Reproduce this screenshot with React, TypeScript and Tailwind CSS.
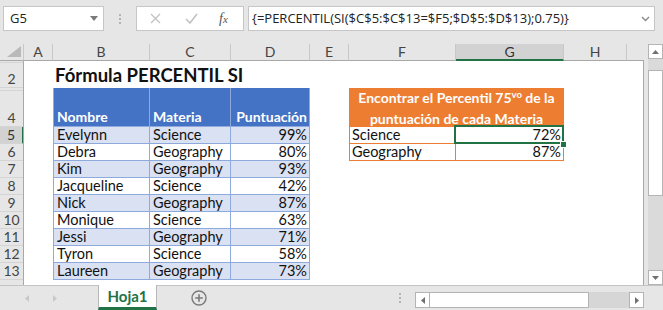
import React from "react";

const SCORES = [
  ["Evelynn", "Science", "99%"],
  ["Debra", "Geography", "80%"],
  ["Kim", "Geography", "93%"],
  ["Jacqueline", "Science", "42%"],
  ["Nick", "Geography", "87%"],
  ["Monique", "Science", "63%"],
  ["Jessi", "Geography", "71%"],
  ["Tyron", "Science", "58%"],
  ["Laureen", "Geography", "73%"],
];

const COLUMNS = ["A", "B", "C", "D", "E", "F", "G", "H"];

const ROW_HEADS = [
  { label: "", h: "h-[2px]" },
  { label: "2", h: "h-[25px]" },
  { label: "", h: "h-[3px]" },
  { label: "4", h: "h-[36px]" },
  ...["5", "6", "7", "8", "9", "10", "11", "12", "13"].map((n) => ({ label: n, h: "h-[17px]" })),
];

const FormulaBar = () => (
  <div className="h-[44px] flex items-start pt-[6px] pl-[3px] font-['Open_Sans',sans-serif]">
    {/* Name box */}
    <div className="w-[101px] h-[25px] bg-white border border-[#c6c6c6] flex items-center justify-between pl-[6px] pr-[5px] text-[13px] text-[#222]">
      <span>G5</span>
      <svg width="8" height="5" viewBox="0 0 8 5">
        <path d="M0 0h8L4 5z" fill="#7a7a7a" />
      </svg>
    </div>
    <div className="w-[32px] h-[25px] flex flex-col items-center justify-center gap-[2px]">
      <span className="w-[2px] h-[2px] bg-[#b4b4b4]" />
      <span className="w-[2px] h-[2px] bg-[#b4b4b4]" />
      <span className="w-[2px] h-[2px] bg-[#b4b4b4]" />
    </div>
    {/* Cancel / enter / fx */}
    <div className="w-[108px] h-[25px] bg-white border border-[#c6c6c6] flex items-center">
      <svg className="ml-[13px]" width="11" height="11" viewBox="0 0 11 11">
        <path d="M1 1l9 9M10 1l-9 9" stroke="#c2c2c2" strokeWidth="1.3" />
      </svg>
      <svg className="ml-[24px]" width="13" height="11" viewBox="0 0 13 11">
        <path d="M1 6l4 4 7-9" stroke="#c2c2c2" strokeWidth="1.6" fill="none" />
      </svg>
      <span className="ml-[21px] font-['Liberation_Serif',serif] italic text-[14px] text-[#555] leading-none">
        f<span className="text-[11px]">x</span>
      </span>
    </div>
    {/* Formula */}
    <div className="ml-[4px] w-[407px] h-[25px] bg-white border border-[#c6c6c6] flex items-center justify-between pl-[3px] pr-[4px] text-[13px] text-[#222] whitespace-nowrap">
      <span>{"{=PERCENTIL(SI($C$5:$C$13=$F5;$D$5:$D$13);0.75)}"}</span>
      <svg width="9" height="6" viewBox="0 0 9 6">
        <path d="M1 1l3.5 3.5L8 1" stroke="#8a8a8a" strokeWidth="1.4" fill="none" />
      </svg>
    </div>
  </div>
);

const Sheet = () => (
  <div className="grid w-[644px] grid-cols-[24px_29px_97px_81px_79px_39px_107px_108px_63px_17px] grid-rows-[17px_2px_25px_3px_36px_repeat(9,17px)_5px] text-[14.5px] leading-[16px]">
    {/* white body */}
    <div className="col-start-2 col-span-9 row-start-2 row-span-14 bg-white border-r border-[#a8a8a8]" />

    {/* corner */}
    <div className="col-start-1 row-start-1 border-b border-r border-b-[#a8a8a8] border-r-[#c8c8c8] flex items-end justify-end pr-[2px] pb-[3px]">
      <svg width="14" height="11" viewBox="0 0 14 11">
        <path d="M14 0v11H0z" fill="#b9b9b9" />
      </svg>
    </div>

    {/* column headers */}
    {COLUMNS.map((c) => (
      <div
        key={c}
        className={
          c === "G"
            ? "row-start-1 flex items-center justify-center bg-[#d2d2d2] border-r border-r-[#c8c8c8] border-b-2 border-b-[#217346] text-[14px] text-[#333]"
            : "row-start-1 flex items-center justify-center border-r border-r-[#c8c8c8] border-b border-b-[#a8a8a8] text-[14px] text-[#444]"
        }
      >
        {c}
      </div>
    ))}
    <div className="row-start-1 border-b border-[#a8a8a8]" />

    {/* row headers */}
    <div className="col-start-1 row-start-2 row-span-14 flex flex-col border-r border-[#a8a8a8] overflow-hidden">
      {ROW_HEADS.map((r, i) => (
        <div
          key={i}
          className={
            r.label === "5"
              ? `${r.h} shrink-0 flex items-end justify-center bg-[#d2d2d2] border-b border-[#d4d4d4] -mr-px border-r-2 border-r-[#217346] text-[14px] text-[#333] leading-[16px]`
              : `${r.h} shrink-0 flex items-end justify-center border-b border-[#d4d4d4] text-[14px] text-[#444] leading-[16px] overflow-hidden`
          }
        >
          {r.label}
        </div>
      ))}
      <div className="h-[5px] shrink-0 flex justify-center text-[14px] text-[#444] leading-[16px] pt-[2px] overflow-hidden">
        14
      </div>
    </div>

    {/* title */}
    <div className="col-start-3 col-span-4 row-start-3 flex items-end pl-[2px] pb-[2px] text-[18.5px] leading-[22px] font-bold whitespace-nowrap">
      Fórmula PERCENTIL SI
    </div>

    {/* data table */}
    <div className="col-start-3 col-span-3 row-start-4 row-span-11 grid grid-cols-[97px_81px_79px] grid-rows-[39px_repeat(9,17px)]">
      <div className="bg-[#4472c4] text-white text-[14px] font-bold flex items-end px-[3px] pb-[1px] border-l border-r border-b border-[#8ea9db]">Nombre</div>
      <div className="bg-[#4472c4] text-white text-[14px] font-bold flex items-end px-[3px] pb-[1px] border-r border-b border-[#8ea9db]">Materia</div>
      <div className="bg-[#4472c4] text-white text-[14px] font-bold flex items-end justify-end px-[2px] pb-[1px] border-r border-b border-[#8ea9db]">Puntuación</div>
      {SCORES.map(([name, subject, score], i) => {
        const bg = i % 2 === 0 ? "bg-[#d9e1f2]" : "bg-white";
        return (
          <React.Fragment key={name}>
            <div className={`${bg} px-[3px] border-l border-r border-b border-[#8ea9db] whitespace-nowrap`}>{name}</div>
            <div className={`${bg} px-[3px] border-r border-b border-[#8ea9db] whitespace-nowrap`}>{subject}</div>
            <div className={`${bg} px-[2px] border-r border-b border-[#8ea9db] text-right`}>{score}</div>
          </React.Fragment>
        );
      })}
    </div>

    {/* result table */}
    <div className="col-start-7 col-span-2 row-start-4 row-span-4 grid grid-cols-[107px_108px] grid-rows-[39px_17px_17px]">
      <div className="col-span-2 bg-[#ed7d31] text-white text-[14px] font-bold text-center leading-[19px] flex flex-col justify-center pt-[1px] border-b border-[#ed7d31] whitespace-nowrap">
        <span>
          Encontrar el Percentil 75<span className="relative -top-[5px] text-[9.5px]">vo</span> de la
        </span>
        <span>puntuación de cada Materia</span>
      </div>
      <div className="px-[2px] border-l border-r border-b border-[#ed7d31]">Science</div>
      <div className="relative px-[2px] border-r border-b border-[#ed7d31] text-right">
        72%
        <div className="absolute -left-[2px] -top-[2px] -right-px -bottom-px border-2 border-[#217346]" />
        <div className="absolute -right-[4px] -bottom-[5px] w-[7px] h-[7px] bg-[#217346] border border-white" />
      </div>
      <div className="px-[2px] border-l border-r border-b border-[#ed7d31]">Geography</div>
      <div className="px-[2px] border-r border-b border-[#ed7d31] text-right">87%</div>
    </div>
  </div>
);

const VScroll = () => (
  <div className="w-[19px] flex flex-col items-end">
    <div className="w-[15px] h-[15px] bg-white border border-[#b4b4b4] flex items-center justify-center">
      <svg width="7" height="4" viewBox="0 0 7 4">
        <path d="M0 4h7L3.5 0z" fill="#707070" />
      </svg>
    </div>
    <div className="w-[15px] flex-1 bg-[#dadada] flex flex-col pt-[11px]">
      <div className="h-[126px] bg-white border border-[#b4b4b4]" />
      <div className="flex-1" />
    </div>
    <div className="w-[15px] h-[15px] bg-white border border-[#b4b4b4] flex items-center justify-center">
      <svg width="7" height="4" viewBox="0 0 7 4">
        <path d="M0 0h7L3.5 4z" fill="#707070" />
      </svg>
    </div>
  </div>
);

const TabBar = () => (
  <div className="h-[25px] flex border-t border-[#c4c4c4] bg-[#e6e6e6]">
    <div className="w-[98px] flex items-center pl-[25px] gap-[24px]">
      <svg width="4" height="7" viewBox="0 0 4 7">
        <path d="M4 0v7L0 3.5z" fill="#c8c8c8" />
      </svg>
      <svg width="4" height="7" viewBox="0 0 4 7">
        <path d="M0 0v7l4-3.5z" fill="#c8c8c8" />
      </svg>
    </div>
    <div className="-mt-px w-[59px] bg-white border-l border-r border-[#b8b8b8] border-b-[3px] border-b-[#217346] flex items-center justify-center font-bold text-[15px] text-[#217346]">
      Hoja1
    </div>
    <div className="ml-[34px] flex items-center">
      <svg width="16" height="16" viewBox="0 0 16 16">
        <circle cx="8" cy="8" r="7" stroke="#7a7a7a" strokeWidth="1.4" fill="none" />
        <path d="M8 4.2v7.6M4.2 8h7.6" stroke="#7a7a7a" strokeWidth="1.6" />
      </svg>
    </div>
    <div className="ml-[192px] flex flex-col justify-center gap-[2px]">
      <span className="w-[2px] h-[2px] bg-[#b4b4b4]" />
      <span className="w-[2px] h-[2px] bg-[#b4b4b4]" />
      <span className="w-[2px] h-[2px] bg-[#b4b4b4]" />
    </div>
    <div className="ml-[14px] self-end mb-[2px] flex h-[16px]">
      <div className="w-[15px] bg-white border border-[#b4b4b4] flex items-center justify-center">
        <svg width="4" height="7" viewBox="0 0 4 7">
          <path d="M4 0v7L0 3.5z" fill="#707070" />
        </svg>
      </div>
      <div className="w-[159px] bg-white border-y border-r border-[#b4b4b4]" />
      <div className="w-[40px] bg-[#d6d6d6]" />
      <div className="w-[15px] bg-white border border-[#b4b4b4] flex items-center justify-center">
        <svg width="4" height="7" viewBox="0 0 4 7">
          <path d="M0 0v7l4-3.5z" fill="#707070" />
        </svg>
      </div>
    </div>
  </div>
);

export default function App() {
  return (
    <div className="w-[663px] h-[310px] overflow-hidden bg-[#e6e6e6] font-[Lato,sans-serif] text-[#111] select-none">
      <FormulaBar />
      <div className="flex h-[241px]">
        <Sheet />
        <VScroll />
      </div>
      <TabBar />
    </div>
  );
}
